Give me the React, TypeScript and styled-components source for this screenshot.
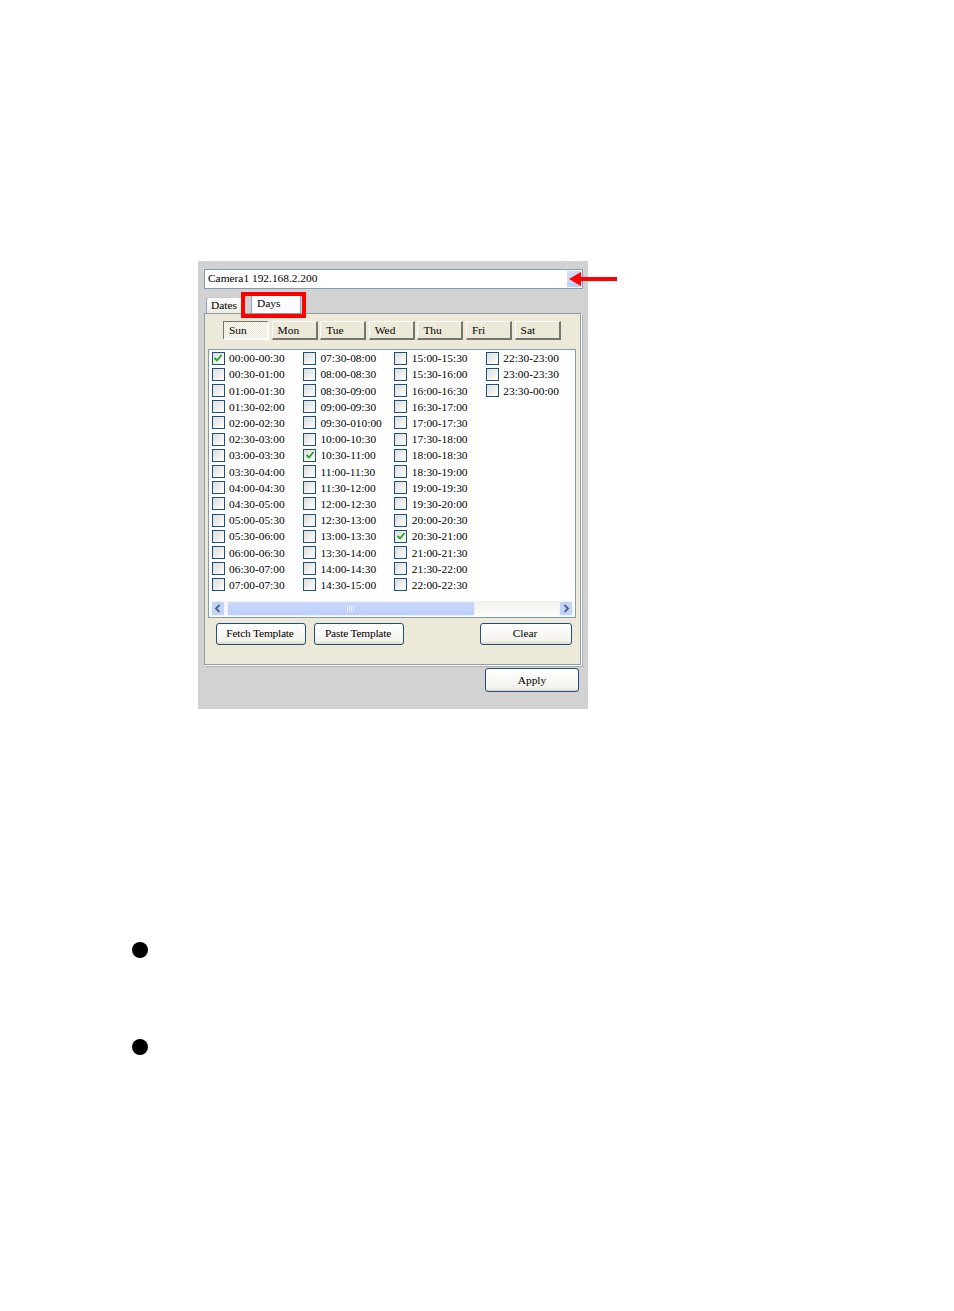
import React from 'react';
import styled, { createGlobalStyle } from 'styled-components';

const Global = createGlobalStyle`
  html, body { margin: 0; padding: 0; background: #fff; }
  body { font-family: "Liberation Serif", "Times New Roman", serif; color: #000; }
`;
const Page = styled.div`
  position: relative;
  width: 954px;
  height: 1311px;
  padding: 261px 0 0 198px;
  box-sizing: border-box;
  overflow: hidden;
`;
const Win = styled.div`
  position: relative;
  width: 390px;
  height: 448px;
  background: #d2d2d2;
  padding: 8px 0 0 6px;
  box-sizing: border-box;
  font-size: 11.4px;
`;
const Combo = styled.div`
  width: 379px;
  height: 20px;
  box-sizing: border-box;
  border: 1px solid #7f9db9;
  background: #fff;
  display: flex;
  justify-content: space-between;
  padding: 1px 1px 0 3px;
  line-height: 14px;
`;
const ComboBtn = styled.div`
  width: 14px;
  height: 16px;
  background: linear-gradient(135deg, #d5e1fb, #b4c8f5);
`;
const Tabs = styled.div`
  display: flex;
  align-items: flex-end;
  height: 24px;
  padding-left: 2px;
`;
const Tab = styled.div<{ $active?: boolean }>`
  box-sizing: border-box;
  height: ${p => (p.$active ? 19 : 16)}px;
  width: ${p => (p.$active ? 50 : 39)}px;
  margin-right: ${p => (p.$active ? 0 : 6)}px;
  padding: ${p => (p.$active ? '1px 0 0 5px' : '1px 0 0 4px')};
  border: 1px solid #91a7b4;
  border-bottom: none;
  border-top: ${p => (p.$active ? '2px solid #f3b53c' : '1px solid #c5cdd0')};
  border-radius: 3px 3px 0 0;
  background: ${p => (p.$active ? '#fcfcfe' : 'linear-gradient(#fff, #ecebe0)')};
  position: relative;
  z-index: ${p => (p.$active ? 2 : 0)};
`;
const Panel = styled.div`
  width: 377px;
  height: 352px;
  box-sizing: border-box;
  background: #ece9d8;
  border: 1px solid #8a9fa9;
  box-shadow: 1px 1px 0 #fff, 2px 2px 0 #aab0ac;
  padding: 7px 3px 0;
`;
const DayRow = styled.div`
  display: flex;
  gap: 2.6px;
  padding-left: 15px;
  height: 28px;
`;
const DayBtn = styled.div<{ $on?: boolean }>`
  box-sizing: border-box;
  width: 46px;
  height: 19px;
  padding: 0 0 ${p => (p.$on ? 0 : 1)}px 5px;
  display: flex;
  align-items: center;
  background: ${p => (p.$on ? 'repeating-conic-gradient(#fbfaf6 0 25%, #ece9d8 0 50%) 0 0 / 2px 2px' : '#ece9d8')};
  border-style: solid;
  border-width: 1px 2px 2px 1px;
  border-color: ${p => (p.$on ? '#77766c #fff #fff #77766c' : '#fff #77766c #77766c #fff')};
`;
const List = styled.div`
  width: 368px;
  height: 269px;
  box-sizing: border-box;
  background: #fff;
  border: 1px solid #7f9db9;
  display: flex;
  flex-direction: column;
  justify-content: space-between;
`;
const Grid = styled.div`
  display: grid;
  grid-auto-flow: column;
  grid-template-rows: repeat(15, 16.21px);
  grid-template-columns: repeat(4, 91.45px);
  padding: 0 0 0 2.6px;
`;
const Item = styled.div`
  display: flex;
  align-items: center;
  gap: 4.4px;
  white-space: nowrap;
`;
const Box = styled.span`
  box-sizing: border-box;
  flex: none;
  width: 13px;
  height: 13px;
  border: 1px solid #1c5180;
  background: linear-gradient(135deg, #dcdcd7, #fff);
  display: flex;
  align-items: center;
  justify-content: center;
`;
const Scroll = styled.div`
  height: 16px;
  margin: 0 2px 0 2px;
  background: linear-gradient(#f3f1ec, #fefefe);
  display: flex;
  align-items: center;
  padding-bottom: 1px;
  gap: 2px;
  box-sizing: border-box;
`;
const ScrollBtn = styled.div`
  width: 14px;
  height: 15px;
  flex: none;
  border: 1px solid #eef3ff;
  border-radius: 2px;
  box-sizing: border-box;
  background: #c3d3f9;
  display: flex;
  align-items: center;
  justify-content: center;
`;
const Thumb = styled.div`
  width: 248px;
  height: 15px;
  box-sizing: border-box;
  border: 1px solid #eef3ff;
  border-radius: 2px;
  background: linear-gradient(#c9d8fc, #bccffa);
  display: flex;
  align-items: center;
  justify-content: center;
  flex: none;
`;
const Spacer = styled.div`
  flex: 1;
`;
const Actions = styled.div`
  display: flex;
  gap: 8px;
  margin-top: 5px;
  padding-left: 8px;
`;
const Btn = styled.div`
  box-sizing: border-box;
  height: 22px;
  border: 1px solid #1f4f7c;
  border-radius: 3px;
  background: linear-gradient(#fff, #f3f2ec 85%, #dcd8ca);
  display: flex;
  align-items: center;
  justify-content: center;
  padding-bottom: 2px;
`;
const TemplateBtn = styled(Btn)`
  width: 90px;
  letter-spacing: -0.2px;
  padding-right: 2px;
`;
const ClearBtn = styled(Btn)`
  width: 92px;
  margin-left: auto;
  margin-right: 5px;
  padding-right: 2px;
`;
const ApplyBtn = styled(Btn)`
  width: 94px;
  height: 24px;
  padding-bottom: 0;
`;
const ApplyRow = styled.div`
  display: flex;
  justify-content: flex-end;
  width: 375px;
  margin-top: 3px;
`;
const Red = styled.div`
  position: absolute;
  left: 43px;
  top: 31px;
  width: 65px;
  height: 26px;
  box-sizing: border-box;
  border: 4px solid #f00;
  z-index: 3;
`;
const Arrow = styled.svg`
  position: absolute;
  left: 371px;
  top: 10px;
  z-index: 3;
`;
const Bullet = styled.div<{ $top: number }>`
  width: 16px;
  height: 16px;
  border-radius: 50%;
  background: #000;
  margin: ${p => p.$top}px 0 0 -66px;
`;

const Check = () => (
  <svg width="10" height="10" viewBox="0 0 10 10">
    <path d="M1.5 5 L4 7.5 L8.5 2" fill="none" stroke="#21a121" strokeWidth="1.8" />
  </svg>
);
const Chevron = ({ d }: { d: string }) => (
  <svg width="8" height="9" viewBox="0 0 8 9">
    <path d={d} fill="none" stroke="#4d6185" strokeWidth="1.8" />
  </svg>
);
const Grip = () => (
  <svg width="8" height="6" viewBox="0 0 8 6">
    <path d="M.5 0V6M2.5 0V6M4.5 0V6M6.5 0V6" stroke="#eef2fe" strokeWidth="1" />
  </svg>
);

const slots = [
  '00:00-00:30','00:30-01:00','01:00-01:30','01:30-02:00','02:00-02:30','02:30-03:00','03:00-03:30','03:30-04:00',
  '04:00-04:30','04:30-05:00','05:00-05:30','05:30-06:00','06:00-06:30','06:30-07:00','07:00-07:30',
  '07:30-08:00','08:00-08:30','08:30-09:00','09:00-09:30','09:30-010:00','10:00-10:30','10:30-11:00','11:00-11:30',
  '11:30-12:00','12:00-12:30','12:30-13:00','13:00-13:30','13:30-14:00','14:00-14:30','14:30-15:00',
  '15:00-15:30','15:30-16:00','16:00-16:30','16:30-17:00','17:00-17:30','17:30-18:00','18:00-18:30','18:30-19:00',
  '19:00-19:30','19:30-20:00','20:00-20:30','20:30-21:00','21:00-21:30','21:30-22:00','22:00-22:30',
  '22:30-23:00','23:00-23:30','23:30-00:00',
];
const checked = new Set(['00:00-00:30', '10:30-11:00', '20:30-21:00']);
const days = ['Sun', 'Mon', 'Tue', 'Wed', 'Thu', 'Fri', 'Sat'];

export default function App() {
  return (
    <Page>
      <Global />
      <Win>
        <Combo>
          <span>Camera1 192.168.2.200</span>
          <ComboBtn />
        </Combo>
        <Tabs>
          <Tab>Dates</Tab>
          <Tab $active>Days</Tab>
        </Tabs>
        <Panel>
          <DayRow>
            {days.map((d, i) => (
              <DayBtn key={d} $on={i === 0}>{d}</DayBtn>
            ))}
          </DayRow>
          <List>
            <Grid>
              {slots.map(s => (
                <Item key={s}>
                  <Box>{checked.has(s) && <Check />}</Box>
                  {s}
                </Item>
              ))}
            </Grid>
            <Scroll>
              <ScrollBtn><Chevron d="M5.5 1 L2 4.5 L5.5 8" /></ScrollBtn>
              <Thumb><Grip /></Thumb>
              <Spacer />
              <ScrollBtn><Chevron d="M2.5 1 L6 4.5 L2.5 8" /></ScrollBtn>
            </Scroll>
          </List>
          <Actions>
            <TemplateBtn>Fetch Template</TemplateBtn>
            <TemplateBtn>Paste Template</TemplateBtn>
            <ClearBtn>Clear</ClearBtn>
          </Actions>
        </Panel>
        <ApplyRow>
          <ApplyBtn>Apply</ApplyBtn>
        </ApplyRow>
        <Red />
        <Arrow width="48" height="16" viewBox="0 0 48 16">
          <path d="M0 8 L12 1 L12 6 L48 6 L48 10 L12 10 L12 15 Z" fill="#f00" />
        </Arrow>
      </Win>
      <Bullet $top={233} />
      <Bullet $top={81} />
    </Page>
  );
}
